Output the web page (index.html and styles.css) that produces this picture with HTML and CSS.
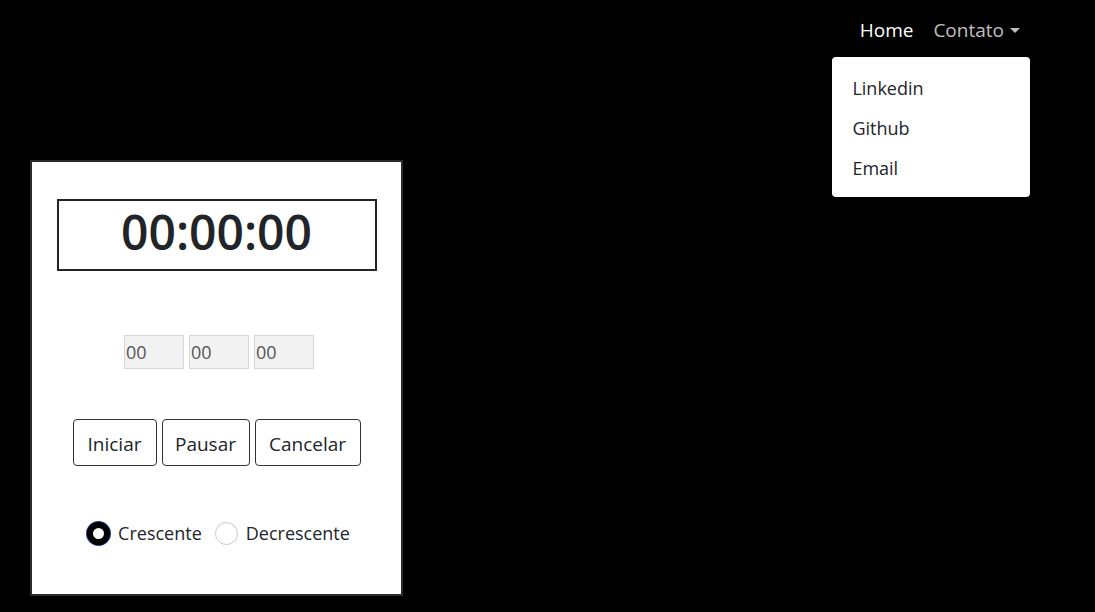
FILE: index.html
```html
<!DOCTYPE html>
<html lang="pt-br">
<head>
<meta charset="utf-8">
<title>Cronômetro</title>
<link rel="stylesheet" href="styles.css">
</head>
<body>
<header class="topbar">
  <nav class="nav">
    <a class="nav-link active" href="#">Home</a>
    <div class="dropdown">
      <a class="nav-link toggle" href="#">Contato<span class="caret"></span></a>
      <ul class="menu">
        <li><a href="#">Linkedin</a></li>
        <li><a href="#">Github</a></li>
        <li><a href="#">Email</a></li>
      </ul>
    </div>
  </nav>
</header>
<main class="content">
  <section class="card">
    <div class="display">00:00:00</div>
    <div class="inputs">
      <input class="field" type="text" value="00">
      <input class="field" type="text" value="00">
      <input class="field" type="text" value="00">
    </div>
    <div class="buttons">
      <button class="btn btn-start">Iniciar</button>
      <button class="btn btn-pause">Pausar</button>
      <button class="btn btn-cancel">Cancelar</button>
    </div>
    <div class="radios">
      <label class="radio"><span class="dot checked"></span>Crescente</label>
      <label class="radio"><span class="dot"></span>Decrescente</label>
    </div>
  </section>
</main>
</body>
</html>
```

FILE: styles.css
```css
* { box-sizing: border-box; }
html, body { margin: 0; padding: 0; }
body {
  background: #000;
  width: 1095px;
  height: 612px;
  overflow: hidden;
  font-family: "Open Sans", "Noto Sans", sans-serif;
  color: #212529;
}
.topbar {
  display: flex;
  justify-content: flex-end;
  padding: 14px 65px 0 0;
  height: 160px;
}
.nav {
  display: flex;
  align-items: center;
  height: 32px;
}
.nav-link {
  font-size: 19px;
  text-decoration: none;
  color: rgba(255,255,255,0.75);
  padding: 0 10px;
  display: flex;
  align-items: center;
}
.nav-link.active { color: #fff; }
.caret {
  display: inline-block;
  margin-left: 6px;
  width: 0; height: 0;
  border-left: 5px solid transparent;
  border-right: 5px solid transparent;
  border-top: 5px solid rgba(255,255,255,0.75);
}
.dropdown { position: relative; }
.menu {
  position: absolute;
  top: 40px;
  left: -91px;
  width: 198px;
  margin: 0;
  padding: 11px 0 9px;
  list-style: none;
  background: #fff;
  border-radius: 4px;
}
.menu li a {
  display: block;
  padding: 0 20px;
  height: 40px;
  line-height: 40px;
  font-size: 18px;
  color: #212529;
  text-decoration: none;
}
.content {
  padding: 0 0 0 30px;
}
.card {
  width: 373px;
  height: 436px;
  background: #fff;
  border: 2px solid #2b2b2b;
  display: flex;
  flex-direction: column;
  align-items: center;
  padding: 37px 24px 0;
}
.display {
  width: 320px;
  height: 72px;
  border: 2px solid #212529;
  display: flex;
  align-items: center;
  justify-content: center;
  padding-bottom: 8px;
  font-size: 48px;
  font-weight: 600;
  color: #212529;
}
.inputs {
  display: flex;
  gap: 5px;
  margin-top: 64px;
  margin-left: 5px;
}
.field {
  width: 60px;
  height: 34px;
  background: #f2f2f2;
  border: 1px solid #d6d6d6;
  font-family: inherit;
  font-size: 18px;
  color: #555;
  padding: 0 0 0 1px;
  margin: 0;
}
.buttons {
  display: flex;
  gap: 5px;
  margin-top: 50px;
}
.btn {
  height: 47px;
  background: #fff;
  border: 1px solid #333;
  border-radius: 4px;
  font-family: inherit;
  font-size: 19px;
  color: #212529;
  padding: 3px 0 0;
}
.btn-start { width: 84px; }
.btn-pause { width: 88px; }
.btn-cancel { width: 106px; }
.radios {
  display: flex;
  gap: 13px;
  margin-top: 55px;
  margin-left: 4px;
  align-items: center;
}
.radio {
  display: flex;
  align-items: center;
  font-size: 18px;
  color: #212529;
}
.dot {
  width: 23px;
  height: 23px;
  border-radius: 50%;
  border: 1px solid #c8c8c8;
  margin-right: 8px;
  background: #fff;
}
.dot.checked {
  border: 6px solid #000;
  box-shadow: 0 0 0 1px #1e3a8a;
}
```
